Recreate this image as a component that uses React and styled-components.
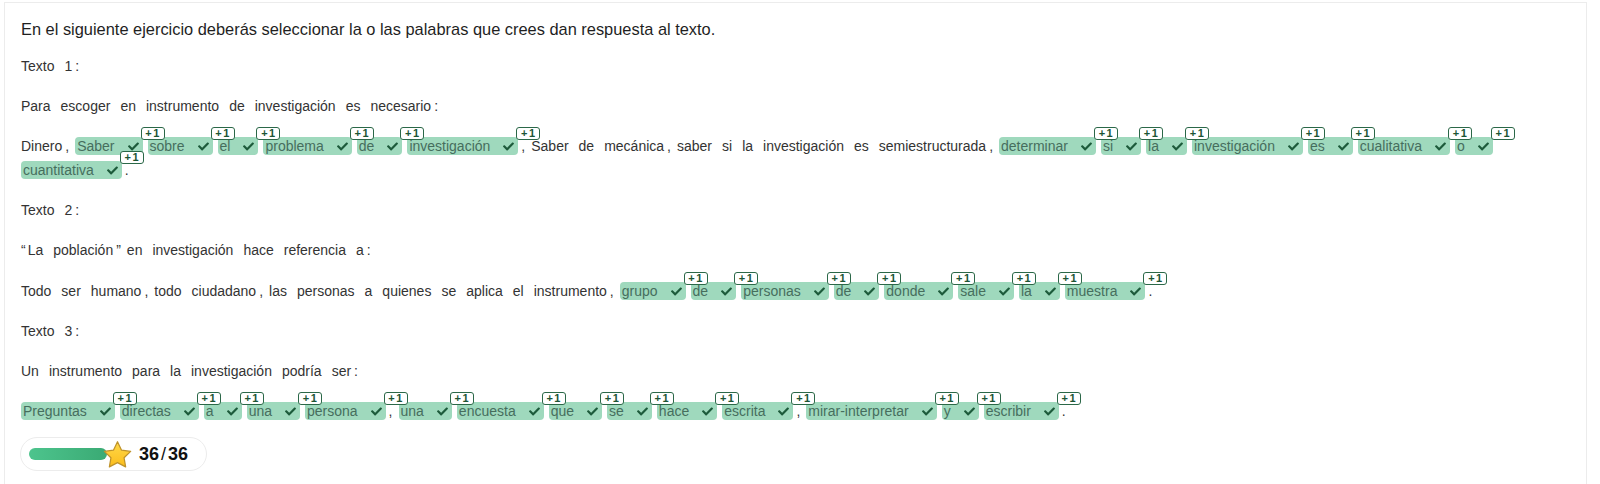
import React from "react";
import styled, { createGlobalStyle } from "styled-components";
import { FaCheck } from "react-icons/fa";

const PUNCT = /^[,.:;”]$/;

const exercises = [
  {
    title: "Texto 1 :",
    question: "Para escoger en instrumento de investigación es necesario :",
    answer: [
      ["t", "Dinero ,"],
      ["c", "Saber sobre el problema de investigación"],
      ["t", ", Saber de mecánica , saber si la investigación es semiestructurada ,"],
      ["c", "determinar si la investigación es cualitativa o cuantitativa"],
      ["t", "."],
    ],
  },
  {
    title: "Texto 2 :",
    question: "“ La población ” en investigación hace referencia a :",
    answer: [
      ["t", "Todo ser humano , todo ciudadano , las personas a quienes se aplica el instrumento ,"],
      ["c", "grupo de personas de donde sale la muestra"],
      ["t", "."],
    ],
  },
  {
    title: "Texto 3 :",
    question: "Un instrumento para la investigación podría ser :",
    answer: [
      ["c", "Preguntas directas a una persona"],
      ["t", ","],
      ["c", "una encuesta que se hace escrita"],
      ["t", ","],
      ["c", "mirar-interpretar y escribir"],
      ["t", "."],
    ],
  },
];

// flatten segments into tokens, each one knows the gap to the next
const tokenize = (segments) => {
  const list = [];
  segments.forEach(([kind, str]) => {
    str.split(" ").forEach((w) => list.push({ kind, w }));
  });
  return list.map((tok, i) => {
    const next = list[i + 1];
    let gap = 0;
    if (next) {
      const curPunct = tok.kind === "t" && PUNCT.test(tok.w);
      if (PUNCT.test(next.w)) gap = 3;
      else if (tok.w === "“") gap = 2;
      else if (curPunct) gap = 6;
      else if (next.kind === "c" && tok.kind === "c") gap = 5;
      else if (next.kind === "c") gap = 7;
      else gap = 10;
    }
    return { ...tok, gap };
  });
};

const Tokens = ({ segments }) =>
  tokenize(segments).map((tok, i) =>
    tok.kind === "c" ? (
      <Chip key={i} $gap={tok.gap}>
        {tok.w}
        <CheckIcon />
        <Badge>+1</Badge>
      </Chip>
    ) : (
      <Word key={i} $gap={tok.gap}>
        {tok.w}
      </Word>
    )
  );

const Star = () => (
  <StarSvg viewBox="0 0 32 30">
    <defs>
      <linearGradient id="starFill" x1="0" y1="0" x2="0" y2="1">
        <stop offset="0" stopColor="#ffd94a" />
        <stop offset="1" stopColor="#fbbd1c" />
      </linearGradient>
    </defs>
    <path
      d="M16 1.8l4.2 8.7 9.4 1.3-6.8 6.6 1.6 9.4L16 23.4l-8.4 4.4 1.6-9.4-6.8-6.6 9.4-1.3z"
      fill="url(#starFill)"
      stroke="#bf932b"
      strokeWidth="1.3"
      strokeLinejoin="round"
    />
  </StarSvg>
);

const App = () => {
  return (
    <>
      <GlobalStyle />
      <Card>
        <Intro>
          En el siguiente ejercicio deberás seleccionar la o las palabras que
          crees dan respuesta al texto.
        </Intro>
        {exercises.map((ex) => (
          <React.Fragment key={ex.title}>
            <Line>
              <Tokens segments={[["t", ex.title]]} />
            </Line>
            <Line>
              <Tokens segments={[["t", ex.question]]} />
            </Line>
            <Line>
              <Tokens segments={ex.answer} />
            </Line>
          </React.Fragment>
        ))}
        <Score>
          <Track />
          <Star />
          <ScoreText>
            36<Slash>/</Slash>36
          </ScoreText>
        </Score>
      </Card>
    </>
  );
};

//=================================
//       Styled-Component
//=================================

const GlobalStyle = createGlobalStyle`
  body {
    margin: 0;
    padding-top: 2px;
    background: #ffffff;
    font-family: "Liberation Sans", Arial, sans-serif;
  }
`;

const Card = styled.div`
  box-sizing: border-box;
  min-height: 482px;
  margin: 0 13px 0 4px;
  padding: 1px 16px 0;
  border: 1px solid #ececec;
  border-bottom: none;
`;

const Intro = styled.p`
  margin: 15.5px 0 16.2px;
  font-size: 16.4px;
  line-height: 18px;
  color: #1f1f1f;
`;

const Line = styled.p`
  margin: 16.2px 0;
  font-size: 14px;
  line-height: 24px;
  color: #333333;
`;

const Word = styled.span`
  display: inline-block;
  margin-right: ${(p) => p.$gap}px;
`;

const Chip = styled.span`
  position: relative;
  display: inline-block;
  margin-right: ${(p) => p.$gap}px;
  padding: 0 4px 0 2px;
  line-height: 18px;
  background: #9fd9bd;
  border-radius: 4px;
  color: #466e5d;
`;

const CheckIcon = styled(FaCheck)`
  width: 11px;
  height: 11px;
  margin-left: 13px;
  vertical-align: -1px;
  color: #1d5b3b;
`;

const Badge = styled.span`
  position: absolute;
  z-index: 1;
  left: calc(100% - 2px);
  top: -10px;
  box-sizing: border-box;
  width: 24px;
  height: 13px;
  border: 1.5px solid #2b6848;
  border-radius: 3px;
  background: #ffffff;
  font-size: 11px;
  font-weight: bold;
  line-height: 10px;
  letter-spacing: 1.5px;
  text-indent: 1px;
  text-align: center;
  color: #1c5535;
`;

const Score = styled.div`
  display: flex;
  align-items: center;
  box-sizing: border-box;
  width: fit-content;
  height: 34px;
  margin: -2px 0 0 -1px;
  padding: 0 18px 0 8px;
  border: 1px solid #ececec;
  border-radius: 17px;
`;

const Track = styled.div`
  width: 78px;
  height: 12px;
  border-radius: 6px;
  background: linear-gradient(90deg, #4dc48d, #3aaa74);
`;

const StarSvg = styled.svg`
  width: 31px;
  height: 29px;
  margin-left: -5px;
`;

const ScoreText = styled.span`
  margin-left: 6px;
  font-size: 18px;
  font-weight: bold;
  color: #111111;
`;

const Slash = styled.span`
  margin: 0 2px;
  font-weight: normal;
`;

export default App;
